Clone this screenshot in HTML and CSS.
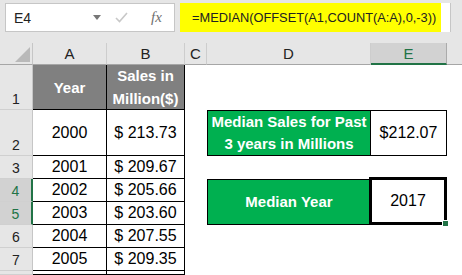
FILE: index.html
```html
<!DOCTYPE html>
<html lang="en">

<head>
    <meta charset="UTF-8">
    <meta name="viewport" content="width=device-width, initial-scale=1.0">
    <title>Median with OFFSET</title>
    <link rel="stylesheet" href="styles.css">
</head>

<body>
    <div class="excel">

        <div class="formula-bar">
            <div class="name-box">
                <span class="cell-ref">E4</span>
                <span class="drop"></span>
                <svg class="check" width="13" height="11" viewBox="0 0 13 11">
                    <path d="M1 6 L4.5 9.5 L12 1" fill="none" stroke="#c8c8c8" stroke-width="1.6" />
                </svg>
                <span class="fx">fx</span>
            </div>
            <div class="formula">
                <div class="formula-fill">=MEDIAN(OFFSET(A1,COUNT(A:A),0,-3))</div>
            </div>
        </div>

        <div class="sheet">
            <!-- column headers -->
            <div class="corner"><span class="tri"></span></div>
            <div class="ch">A</div>
            <div class="ch">B</div>
            <div class="ch">C</div>
            <div class="ch">D</div>
            <div class="ch sel">E</div>
            <div class="ch last"></div>

            <!-- row 1 -->
            <div class="rh">1</div>
            <div class="c t hd">Year</div>
            <div class="c t hd">Sales in<br>Million($)</div>
            <div class="c"></div>
            <div class="c"></div>
            <div class="c"></div>
            <div class="c"></div>

            <!-- row 2 -->
            <div class="rh">2</div>
            <div class="c t">2000</div>
            <div class="c t">$ 213.73</div>
            <div class="c"></div>
            <div class="c green">Median Sales for Past<br>3 years in Millions</div>
            <div class="c val">$212.07</div>
            <div class="c"></div>

            <!-- row 3 -->
            <div class="rh">3</div>
            <div class="c t">2001</div>
            <div class="c t">$ 209.67</div>
            <div class="c"></div>
            <div class="c"></div>
            <div class="c"></div>
            <div class="c"></div>

            <!-- row 4 -->
            <div class="rh sel">4</div>
            <div class="c t">2002</div>
            <div class="c t">$ 205.66</div>
            <div class="c"></div>
            <div class="c green tall">Median Year</div>
            <div class="c active tall">2017<span class="handle"></span></div>
            <div class="c"></div>

            <!-- row 5 -->
            <div class="rh sel">5</div>
            <div class="c t">2003</div>
            <div class="c t">$ 203.60</div>
            <div class="c"></div>
            <div class="c"></div>

            <!-- row 6 -->
            <div class="rh">6</div>
            <div class="c t">2004</div>
            <div class="c t">$ 207.55</div>
            <div class="c"></div>
            <div class="c"></div>
            <div class="c"></div>
            <div class="c"></div>

            <!-- row 7 -->
            <div class="rh">7</div>
            <div class="c t">2005</div>
            <div class="c t">$ 209.35</div>
            <div class="c"></div>
            <div class="c"></div>
            <div class="c"></div>
            <div class="c"></div>

            <!-- row 8, only its top edge shows -->
            <div class="rh"></div>
            <div class="c t"></div>
            <div class="c t"></div>
            <div class="c"></div>
            <div class="c"></div>
            <div class="c"></div>
            <div class="c"></div>
        </div>

    </div>
</body>

</html>
```

FILE: styles.css
```css
body {
    margin: 0;
    font-family: "Liberation Sans", Arial, sans-serif;
}

.excel {
    width: 462px;
    height: 275px;
    overflow: hidden;
    background-color: #e6e6e6;
}

/* formula bar */

.formula-bar {
    display: flex;
    gap: 5px;
    height: 43px;
    padding: 3px 0 0 5px;
    box-sizing: border-box;
}

.name-box {
    width: 170px;
    height: 29px;
    box-sizing: border-box;
    background-color: #fff;
    border: 1px solid #c6c6c6;
    display: flex;
    align-items: center;
    padding-left: 8px;
}

.cell-ref {
    width: 79px;
    font-size: 14px;
    color: #222;
}

.drop {
    width: 0;
    height: 0;
    border-left: 4px solid transparent;
    border-right: 4px solid transparent;
    border-top: 5px solid #777;
}

.check {
    margin-left: 14px;
}

.fx {
    margin-left: 23px;
    font-family: "Liberation Serif", serif;
    font-style: italic;
    font-size: 15px;
    color: #6f6f6f;
}

.formula {
    width: 271px;
    height: 29px;
    box-sizing: border-box;
    background-color: #fff;
    border-right: 1px solid #c6c6c6;
    display: flex;
}

.formula-fill {
    width: 261px;
    background-color: #ffff00;
    display: flex;
    align-items: center;
    padding-left: 12px;
    box-sizing: border-box;
    font-size: 12.8px;
    color: #222;
}

/* grid */

.sheet {
    display: grid;
    grid-template-columns: 33px 74px 78px 22px 164px 76px 1fr;
    grid-template-rows: 22px 45px 46px repeat(5, 23px) 1fr;
    height: 232px;
    background-color: #fff;
}

.corner {
    background-color: #e6e6e6;
    border-right: 1px solid #c6c6c6;
    border-bottom: 1px solid #a6a6a6;
    display: flex;
    justify-content: flex-end;
    align-items: flex-end;
    padding: 0 2px 2px 0;
}

.tri {
    width: 0;
    height: 0;
    border-left: 15px solid transparent;
    border-bottom: 15px solid #b9b9b9;
}

.ch {
    background-color: #e6e6e6;
    border-right: 1px solid #cdcdcd;
    border-bottom: 1px solid #a6a6a6;
    display: flex;
    justify-content: center;
    align-items: center;
    font-size: 15px;
    color: #222;
}

.ch.sel {
    background-color: #d2d2d2;
    color: #217346;
    border-right: 1px solid #ababab;
    border-bottom: 2px solid #217346;
}

.ch.last {
    border-right: none;
}

.rh {
    background-color: #e6e6e6;
    border-right: 1px solid #c6c6c6;
    border-bottom: 1px solid #d0d0d0;
    display: flex;
    justify-content: center;
    align-items: flex-end;
    padding-bottom: 2px;
    font-size: 14px;
    color: #222;
}

.rh.sel {
    background-color: #d2d2d2;
    color: #217346;
    border-right: 2px solid #217346;
}

/* cells */

.c {
    display: flex;
    justify-content: center;
    align-items: center;
    text-align: center;
    font-size: 16px;
    color: #000;
}

.t {
    border-right: 1px solid #000;
    border-bottom: 1px solid #000;
}

.hd {
    background-color: #808080;
    color: #fff;
    font-weight: bold;
    font-size: 15px;
    line-height: 23px;
}

.green {
    background-color: #00b050;
    color: #fff;
    font-weight: bold;
    font-size: 15px;
    line-height: 22px;
    border: 1px solid #000;
}

.val {
    border: 1px solid #000;
    border-left: none;
}

.tall {
    grid-row: span 2;
}

.active {
    position: relative;
    border: 3px solid #000;
    margin: -2px 0 0 -2px;
}

.handle {
    position: absolute;
    right: -5px;
    bottom: -5px;
    width: 5px;
    height: 5px;
    background-color: #217346;
    border: 1px solid #fff;
}
```
